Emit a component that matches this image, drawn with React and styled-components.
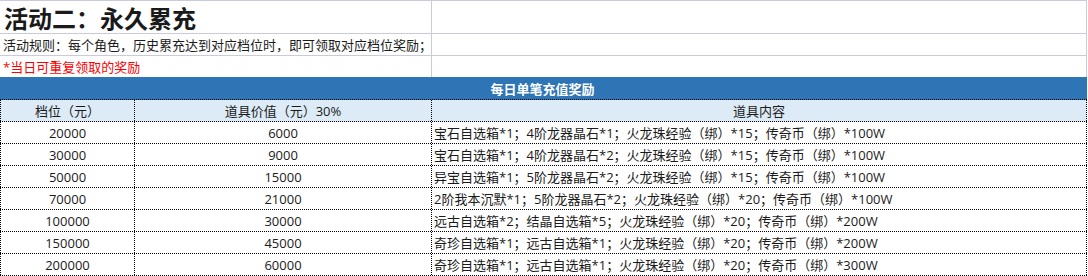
import React from 'react'
import styled, { createGlobalStyle } from 'styled-components'

const GlobalStyle = createGlobalStyle`
  html, body {
    margin: 0;
    padding: 0;
    background: #fff;
  }
  body {
    font-family: "Open Sans", "Noto Sans CJK SC", sans-serif;
    font-size: 13px;
    color: #1a1a1a;
  }
`

const Sheet = styled.div`
  width: 1087px;
`

const InfoBlock = styled.div`
  border-top: 1px solid #c8ccd9;
`

const InfoRow = styled.div`
  display: grid;
  grid-template-columns: 432px 655px;
  height: ${p => p.$h}px;
  box-sizing: border-box;
  border-bottom: ${p => (p.$last ? 'none' : '1px solid #c8ccd9')};
`

const InfoCell = styled.div`
  display: flex;
  align-items: center;
  padding-left: ${p => p.$pad || 3}px;
  border-right: 1px solid #c8ccd9;
  white-space: nowrap;
  overflow: hidden;
  color: ${p => p.$color || '#1a1a1a'};
  font-size: ${p => p.$size || 13}px;
  font-weight: ${p => (p.$bold ? 700 : 400)};
`

const Banner = styled.div`
  height: 23px;
  box-sizing: border-box;
  background: #2e75b6;
  border-bottom: 1px dotted #000;
  color: #fff;
  font-weight: 700;
  display: flex;
  align-items: center;
  justify-content: center;
  padding-right: 2px;
`

const Row = styled.div`
  display: grid;
  grid-template-columns: 135px 297px 655px;
  height: 22px;
  box-sizing: border-box;
  border-bottom: 1px dotted #000;
  background: ${p => (p.$head ? '#ddebf7' : '#fff')};
`

const Cell = styled.div`
  display: flex;
  align-items: center;
  justify-content: ${p => (p.$left ? 'flex-start' : 'center')};
  padding-left: ${p => (p.$left ? '2px' : '0')};
  border-right: 1px dotted #000;
  border-left: ${p => (p.$first ? '1px dotted #000' : 'none')};
  white-space: nowrap;
  overflow: hidden;
`

const tiers = [
  ['20000', '6000', '宝石自选箱*1；4阶龙器晶石*1；火龙珠经验（绑）*15；传奇币（绑）*100W'],
  ['30000', '9000', '宝石自选箱*1；4阶龙器晶石*2；火龙珠经验（绑）*15；传奇币（绑）*100W'],
  ['50000', '15000', '异宝自选箱*1；5阶龙器晶石*2；火龙珠经验（绑）*15；传奇币（绑）*100W'],
  ['70000', '21000', '2阶我本沉默*1；5阶龙器晶石*2；火龙珠经验（绑）*20；传奇币（绑）*100W'],
  ['100000', '30000', '远古自选箱*2；结晶自选箱*5；火龙珠经验（绑）*20；传奇币（绑）*200W'],
  ['150000', '45000', '奇珍自选箱*1；远古自选箱*1；火龙珠经验（绑）*20；传奇币（绑）*200W'],
  ['200000', '60000', '奇珍自选箱*1；远古自选箱*1；火龙珠经验（绑）*20；传奇币（绑）*300W'],
]

export default function App() {
  return (
    <>
      <GlobalStyle />
      <Sheet>
        <InfoBlock>
          <InfoRow $h={33}>
            <InfoCell $size={24} $bold $pad={4}>活动二：永久累充</InfoCell>
            <InfoCell />
          </InfoRow>
          <InfoRow $h={22}>
            <InfoCell>活动规则：每个角色，历史累充达到对应档位时，即可领取对应档位奖励；</InfoCell>
            <InfoCell />
          </InfoRow>
          <InfoRow $h={21} $last>
            <InfoCell $color="#ff0000">*当日可重复领取的奖励</InfoCell>
            <InfoCell />
          </InfoRow>
        </InfoBlock>
        <Banner>每日单笔充值奖励</Banner>
        <Row $head>
          <Cell $first>档位（元）</Cell>
          <Cell>道具价值（元）30%</Cell>
          <Cell>道具内容</Cell>
        </Row>
        {tiers.map(([level, value, items]) => (
          <Row key={level}>
            <Cell $first>{level}</Cell>
            <Cell>{value}</Cell>
            <Cell $left>{items}</Cell>
          </Row>
        ))}
      </Sheet>
    </>
  )
}
